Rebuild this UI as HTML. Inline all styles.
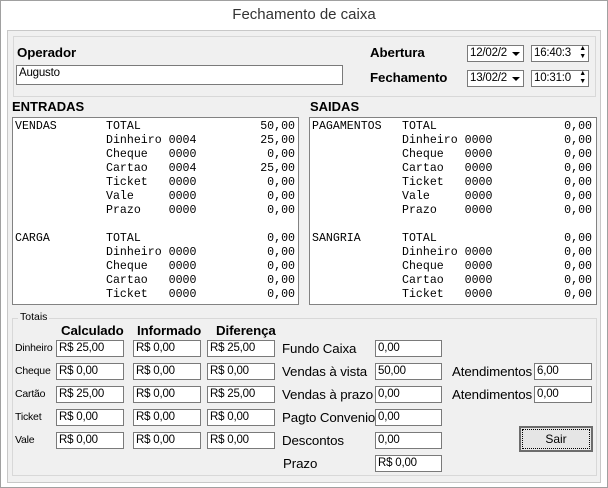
<!DOCTYPE html>
<html><head><meta charset="utf-8"><style>
*{margin:0;padding:0;box-sizing:border-box}
body{width:608px;height:488px;background:#fff;position:relative;overflow:hidden;font-family:"Liberation Sans",sans-serif;color:#000}
.a{position:absolute}
.frame{left:0;top:0;width:608px;height:488px;border:1px solid #a0a0a0}
.panel{left:7px;top:30px;width:594px;height:453px;background:#f0f0f0;border:1px solid #c8c8c8}
.grp{border:1px solid #d8d8d8}
.inp{background:#fff;border:1px solid #7a7a7a;font-size:11.5px;line-height:15px;padding-left:2px;white-space:nowrap;overflow:hidden;letter-spacing:-0.2px}
.lb{font-size:13.3px;white-space:nowrap;letter-spacing:-0.1px}
.b{font-weight:bold}
.sm{font-size:10.5px;letter-spacing:-0.2px}
.box{background:#fff;border:1px solid #828282}
.mono{font-family:"Liberation Mono",monospace;font-size:11.6px;line-height:14px;white-space:pre;position:absolute}
.arr{position:absolute;right:3px;top:6px;width:0;height:0;border-left:4px solid transparent;border-right:4px solid transparent;border-top:4px solid #000}
.sp{position:absolute;right:2px;top:-1px;font-size:7px;line-height:8px;background:#fff;padding-left:1px}
</style></head><body>
<div class="a frame"></div>
<div class="a" style="left:0;top:6px;width:608px;text-align:center;font-size:15px;color:#333">Fechamento de caixa</div>
<div class="a panel"></div>
<div class="a grp" style="left:13px;top:36px;width:583px;height:61px"></div>
<div class="a lb b" style="left:17px;top:45px">Operador</div>
<div class="a inp" style="left:16px;top:65px;width:327px;height:20px">Augusto</div>
<div class="a lb b" style="left:370px;top:45px">Abertura</div>
<div class="a lb b" style="left:370px;top:70px">Fechamento</div>
<div class="a inp" style="left:467px;top:45px;width:57px;height:17px">12/02/2<div class="arr"></div></div>
<div class="a inp" style="left:531px;top:45px;width:58px;height:17px">16:40:3<span class="sp">▲<br>▼</span></div>
<div class="a inp" style="left:467px;top:70px;width:57px;height:17px">13/02/2<div class="arr"></div></div>
<div class="a inp" style="left:531px;top:70px;width:58px;height:17px">10:31:0<span class="sp">▲<br>▼</span></div>

<div class="a b" style="left:12px;top:99px;font-size:13px">ENTRADAS</div>
<div class="a b" style="left:310px;top:99px;font-size:13px">SAIDAS</div>
<div class="a box" style="left:12px;top:117px;width:287px;height:188px"></div>
<div class="a box" style="left:309px;top:117px;width:288px;height:188px"></div>
<div class="mono" style="left:15px;top:120px">VENDAS</div>
<div class="mono" style="left:15px;top:232px">CARGA</div>
<div class="mono" style="left:106px;top:120px">TOTAL
Dinheiro 0004
Cheque   0000
Cartao   0004
Ticket   0000
Vale     0000
Prazo    0000

TOTAL
Dinheiro 0000
Cheque   0000
Cartao   0000
Ticket   0000</div>
<div class="mono" style="left:200px;width:95px;text-align:right;top:120px">50,00
25,00
0,00
25,00
0,00
0,00
0,00

0,00
0,00
0,00
0,00
0,00</div>
<div class="mono" style="left:312px;top:120px">PAGAMENTOS</div>
<div class="mono" style="left:312px;top:232px">SANGRIA</div>
<div class="mono" style="left:402px;top:120px">TOTAL
Dinheiro 0000
Cheque   0000
Cartao   0000
Ticket   0000
Vale     0000
Prazo    0000

TOTAL
Dinheiro 0000
Cheque   0000
Cartao   0000
Ticket   0000</div>
<div class="mono" style="left:497px;width:95px;text-align:right;top:120px">0,00
0,00
0,00
0,00
0,00
0,00
0,00

0,00
0,00
0,00
0,00
0,00</div>

<div class="a grp" style="left:12px;top:318px;width:585px;height:158px"></div>
<div class="a" style="left:18px;top:311px;font-size:10.5px;background:#f0f0f0;padding:0 2px">Totais</div>
<div class="a lb b" style="left:61px;top:323px">Calculado</div>
<div class="a lb b" style="left:137px;top:323px">Informado</div>
<div class="a lb b" style="left:216px;top:323px">Diferença</div>

<div class="a sm" style="left:15px;top:342px">Dinheiro</div>
<div class="a sm" style="left:15px;top:365px">Cheque</div>
<div class="a sm" style="left:15px;top:388px">Cartão</div>
<div class="a sm" style="left:15px;top:411px">Ticket</div>
<div class="a sm" style="left:15px;top:434px">Vale</div>

<div class="a inp" style="left:56px;top:340px;width:68px;height:17px">R$ 25,00</div>
<div class="a inp" style="left:133px;top:340px;width:68px;height:17px">R$ 0,00</div>
<div class="a inp" style="left:207px;top:340px;width:68px;height:17px">R$ 25,00</div>
<div class="a inp" style="left:56px;top:363px;width:68px;height:17px">R$ 0,00</div>
<div class="a inp" style="left:133px;top:363px;width:68px;height:17px">R$ 0,00</div>
<div class="a inp" style="left:207px;top:363px;width:68px;height:17px">R$ 0,00</div>
<div class="a inp" style="left:56px;top:386px;width:68px;height:17px">R$ 25,00</div>
<div class="a inp" style="left:133px;top:386px;width:68px;height:17px">R$ 0,00</div>
<div class="a inp" style="left:207px;top:386px;width:68px;height:17px">R$ 25,00</div>
<div class="a inp" style="left:56px;top:409px;width:68px;height:17px">R$ 0,00</div>
<div class="a inp" style="left:133px;top:409px;width:68px;height:17px">R$ 0,00</div>
<div class="a inp" style="left:207px;top:409px;width:68px;height:17px">R$ 0,00</div>
<div class="a inp" style="left:56px;top:432px;width:68px;height:17px">R$ 0,00</div>
<div class="a inp" style="left:133px;top:432px;width:68px;height:17px">R$ 0,00</div>
<div class="a inp" style="left:207px;top:432px;width:68px;height:17px">R$ 0,00</div>

<div class="a lb" style="left:282px;top:341px">Fundo Caixa</div>
<div class="a lb" style="left:282px;top:364px">Vendas à vista</div>
<div class="a lb" style="left:282px;top:387px">Vendas à prazo</div>
<div class="a lb" style="left:282px;top:410px">Pagto Convenio</div>
<div class="a lb" style="left:282px;top:433px">Descontos</div>
<div class="a lb" style="left:283px;top:456px">Prazo</div>
<div class="a inp" style="left:375px;top:340px;width:67px;height:17px">0,00</div>
<div class="a inp" style="left:375px;top:363px;width:67px;height:17px">50,00</div>
<div class="a inp" style="left:375px;top:386px;width:67px;height:17px">0,00</div>
<div class="a inp" style="left:375px;top:409px;width:67px;height:17px">0,00</div>
<div class="a inp" style="left:375px;top:432px;width:67px;height:17px">0,00</div>
<div class="a inp" style="left:375px;top:455px;width:67px;height:17px">R$ 0,00</div>

<div class="a lb" style="left:452px;top:364px">Atendimentos</div>
<div class="a lb" style="left:452px;top:387px">Atendimentos</div>
<div class="a inp" style="left:534px;top:363px;width:58px;height:17px">6,00</div>
<div class="a inp" style="left:534px;top:386px;width:58px;height:17px">0,00</div>

<div class="a" style="left:519px;top:426px;width:74px;height:26px;border:2px solid #6d6d6d;background:#e5e5e5;padding:1px"><div style="border:1px dotted #000;height:100%;text-align:center;font-size:12px;line-height:18px">Sair</div></div>
</body></html>
